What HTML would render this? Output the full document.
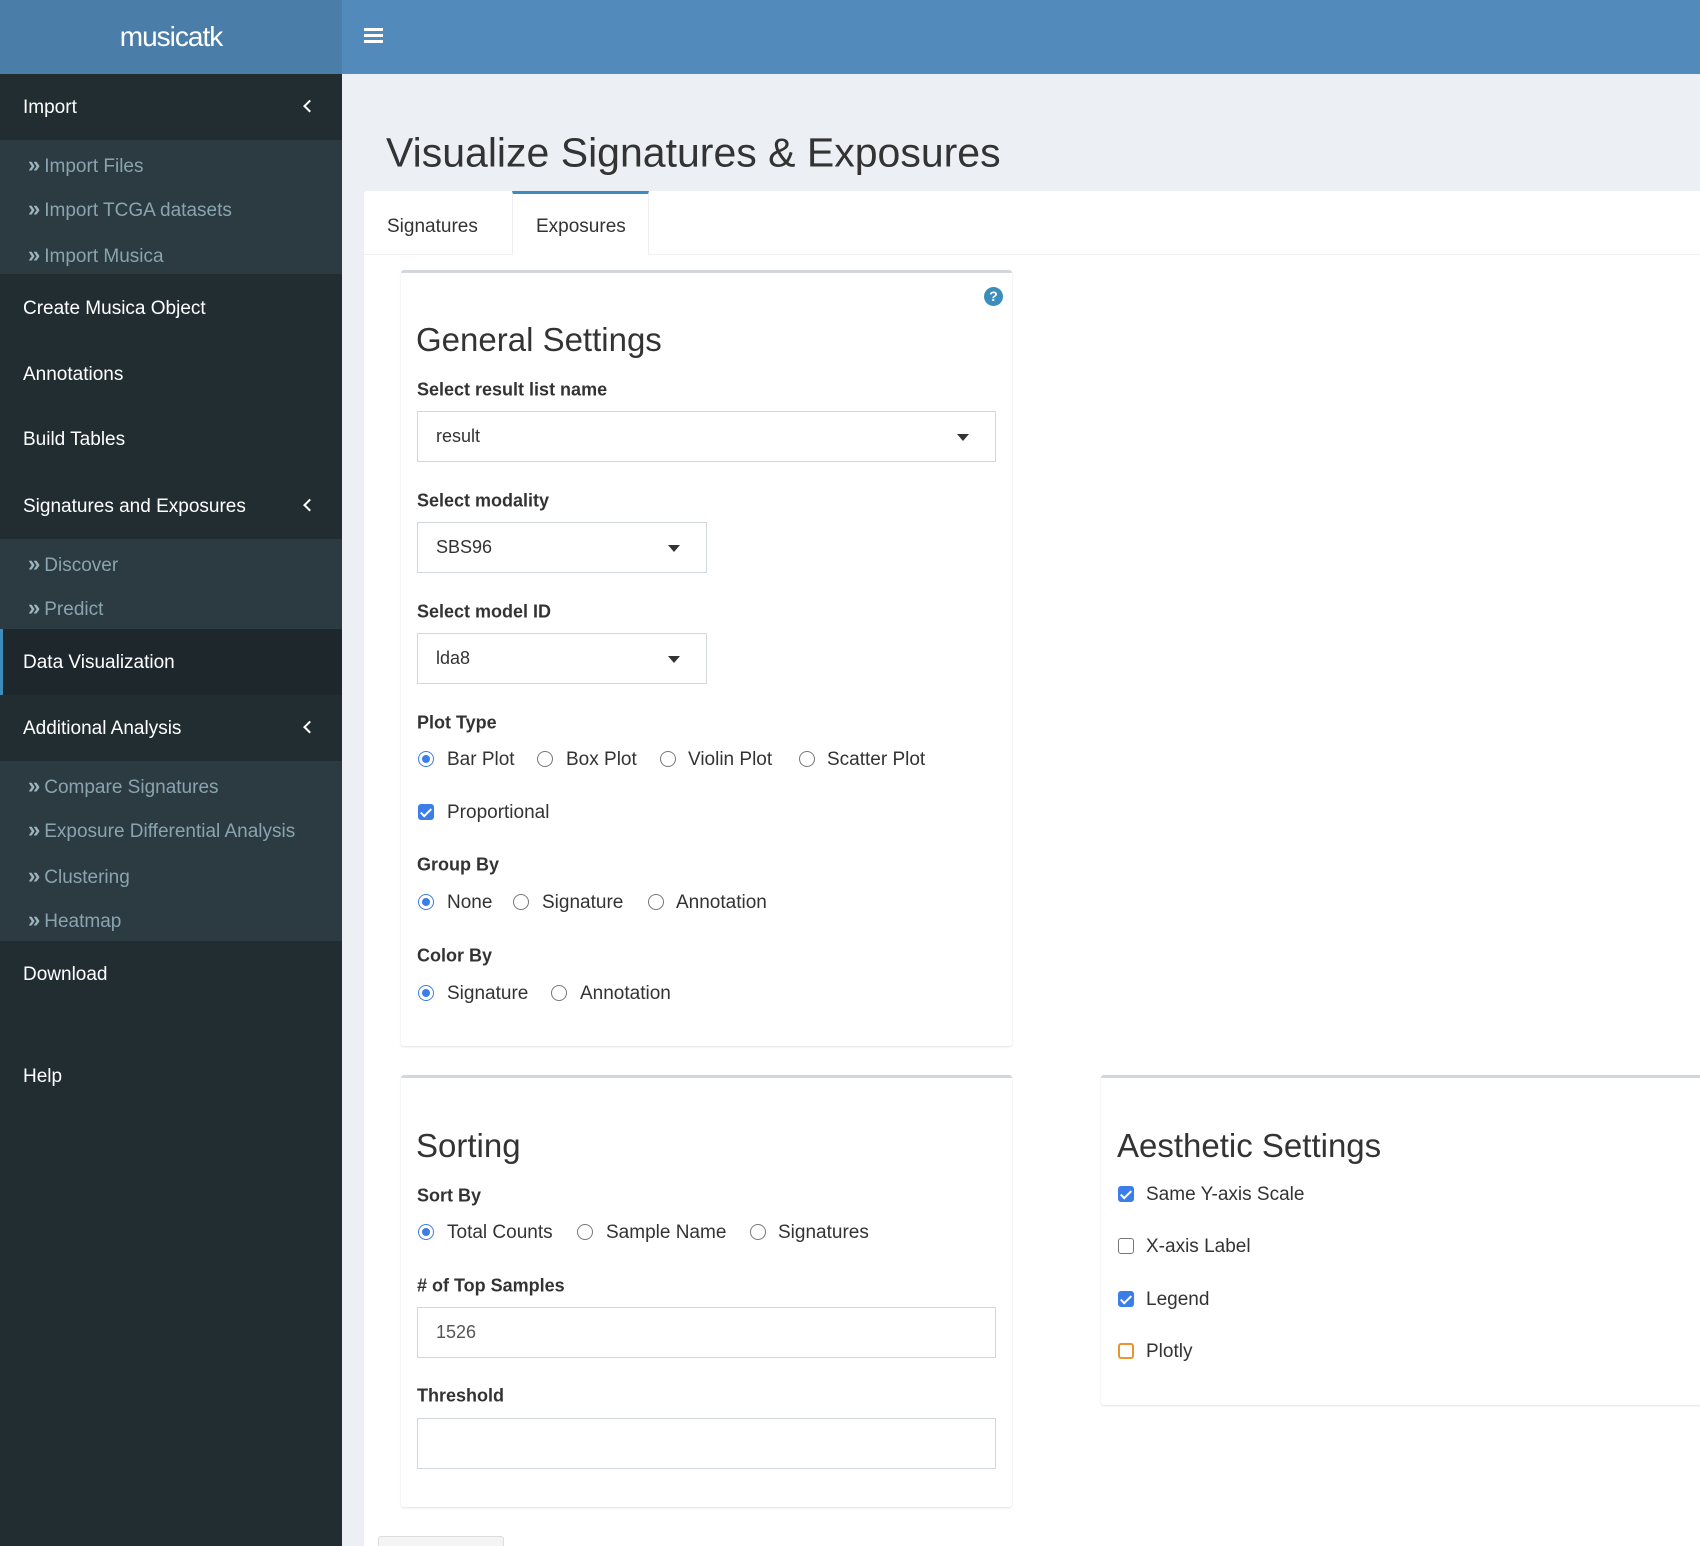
<!DOCTYPE html>
<html><head><meta charset="utf-8"><style>
*{box-sizing:border-box;margin:0;padding:0}
html,body{width:1700px;height:1546px;overflow:hidden}
body{background:#ecf0f5;font-family:"Liberation Sans",sans-serif;color:#333;position:relative}
.a{position:absolute}
.logo{left:0;top:0;width:342px;height:74px;background:#4a7ea8;color:#fff;font-size:28px;text-align:center;line-height:74px;letter-spacing:-1px}
.hdr{left:342px;top:0;width:1358px;height:74px;background:#528bbb}
.side{left:0;top:74px;width:342px;height:1472px;background:#222d32}
.it{position:absolute;left:0;width:342px;color:#fff;font-size:19px;padding-left:23px;display:flex;align-items:center;padding-top:2px}
.sub{position:absolute;left:0;width:342px;background:#2c3b41}
.si{position:absolute;left:28px;color:#8aa4af;font-size:19px;transform:translateY(-50%);margin-top:2px}
.si b{font-weight:bold;margin-right:4px;font-size:22px;color:#9fb5be}
.chev{position:absolute;right:28px;top:50%;width:9px;height:9px;border-left:2.5px solid #fff;border-bottom:2.5px solid #fff;transform:translateY(-60%) rotate(45deg)}
.lab{position:absolute;font-weight:bold;font-size:18px;color:#333;transform:translateY(-50%);margin-top:2px}
.t{position:absolute;font-size:19px;transform:translateY(-50%);margin-top:1px}
.h{position:absolute;font-size:33px;transform:translateY(-50%);color:#333;margin-top:2px}
.sel{position:absolute;border:1px solid #d2d6de;background:#fff;font-size:18px;padding-left:18px;display:flex;align-items:center}
.caret{position:absolute;right:26px;top:50%;margin-top:-3px;border-left:6px solid transparent;border-right:6px solid transparent;border-top:7px solid #333}
.card{position:absolute;background:#fff;border-top:3px solid #d2d6de;border-radius:3px;box-shadow:0 1px 2px rgba(0,0,0,.12)}
.r{position:absolute;width:16px;height:16px;border:1.5px solid #777;border-radius:50%;background:#fff;transform:translate(-50%,-50%)}
.r.on{border:1.5px solid #3b7de9}
.r.on::after{content:"";position:absolute;left:2.5px;top:2.5px;width:8px;height:8px;border-radius:50%;background:#3b7de9}
.c{position:absolute;width:16px;height:16px;border:1.5px solid #777;border-radius:3px;background:#fff;transform:translate(-50%,-50%)}
.c.on{background:#3b7de9;border-color:#3b7de9}
.c.on::after{content:"";position:absolute;left:4px;top:0.5px;width:4px;height:9px;border:solid #fff;border-width:0 2px 2px 0;transform:rotate(45deg)}
</style></head><body>
<div class="a logo">musicatk</div>
<div class="a hdr"><div class="a" style="left:22px;top:28px;width:19px;height:3px;background:#fff;box-shadow:0 6px 0 #fff,0 12px 0 #fff"></div></div>
<div class="a side"></div>
<div class="it" style="top:74px;height:66px">Import<span class="chev"></span></div>
<div class="sub" style="top:140px;height:134px"></div>
<div class="si" style="top:163px"><b>»</b>Import Files</div>
<div class="si" style="top:207px"><b>»</b>Import TCGA datasets</div>
<div class="si" style="top:253px"><b>»</b>Import Musica</div>
<div class="it" style="top:275px;height:66px">Create Musica Object</div>
<div class="it" style="top:341px;height:66px">Annotations</div>
<div class="it" style="top:406px;height:66px">Build Tables</div>
<div class="it" style="top:473px;height:66px">Signatures and Exposures<span class="chev"></span></div>
<div class="sub" style="top:539px;height:90px"></div>
<div class="si" style="top:562px"><b>»</b>Discover</div>
<div class="si" style="top:606px"><b>»</b>Predict</div>
<div class="it" style="top:629px;height:66px;background:#1e282c;border-left:3px solid #3c8dbc;padding-left:20px">Data Visualization</div>
<div class="it" style="top:695px;height:66px">Additional Analysis<span class="chev"></span></div>
<div class="sub" style="top:761px;height:180px"></div>
<div class="si" style="top:784px"><b>»</b>Compare Signatures</div>
<div class="si" style="top:828px"><b>»</b>Exposure Differential Analysis</div>
<div class="si" style="top:874px"><b>»</b>Clustering</div>
<div class="si" style="top:918px"><b>»</b>Heatmap</div>
<div class="it" style="top:941px;height:66px">Download</div>
<div class="it" style="top:1043px;height:66px">Help</div>

<div class="a" style="left:386px;top:153px;transform:translateY(-50%);font-size:41px;color:#333">Visualize Signatures &amp; Exposures</div>
<div class="a" style="left:364px;top:191px;width:1336px;height:1355px;background:#fff;border-radius:3px 0 0 0"></div>
<div class="a" style="left:364px;top:254px;width:1336px;height:1px;background:#f0f0f0"></div>
<div class="t" style="left:387px;top:226px">Signatures</div>
<div class="a" style="left:512px;top:191px;width:137px;height:64px;border-top:3px solid #3c8dbc;border-left:1px solid #eee;border-right:1px solid #eee;background:#fff"></div>
<div class="t" style="left:536px;top:226px">Exposures</div>

<div class="card" style="left:401px;top:270px;width:611px;height:776px"></div>
<div class="a" style="left:984px;top:287px;width:19px;height:19px;border-radius:50%;background:#3c8dbc;color:#fff;font-size:14px;font-weight:bold;text-align:center;line-height:19px">?</div>
<div class="h" style="left:416px;top:338px">General Settings</div>
<div class="lab" style="left:417px;top:388px">Select result list name</div>
<div class="sel" style="left:417px;top:411px;width:579px;height:51px">result<span class="caret"></span></div>
<div class="lab" style="left:417px;top:499px">Select modality</div>
<div class="sel" style="left:417px;top:522px;width:290px;height:51px">SBS96<span class="caret"></span></div>
<div class="lab" style="left:417px;top:610px">Select model ID</div>
<div class="sel" style="left:417px;top:633px;width:290px;height:51px">lda8<span class="caret"></span></div>
<div class="lab" style="left:417px;top:721px">Plot Type</div>
<div class="r on" style="left:426px;top:759px"></div><div class="t" style="left:447px;top:759px">Bar Plot</div>
<div class="r" style="left:545px;top:759px"></div><div class="t" style="left:566px;top:759px">Box Plot</div>
<div class="r" style="left:668px;top:759px"></div><div class="t" style="left:688px;top:759px">Violin Plot</div>
<div class="r" style="left:807px;top:759px"></div><div class="t" style="left:827px;top:759px">Scatter Plot</div>
<div class="c on" style="left:426px;top:812px"></div><div class="t" style="left:447px;top:812px">Proportional</div>
<div class="lab" style="left:417px;top:863px">Group By</div>
<div class="r on" style="left:426px;top:902px"></div><div class="t" style="left:447px;top:902px">None</div>
<div class="r" style="left:521px;top:902px"></div><div class="t" style="left:542px;top:902px">Signature</div>
<div class="r" style="left:656px;top:902px"></div><div class="t" style="left:676px;top:902px">Annotation</div>
<div class="lab" style="left:417px;top:954px">Color By</div>
<div class="r on" style="left:426px;top:993px"></div><div class="t" style="left:447px;top:993px">Signature</div>
<div class="r" style="left:559px;top:993px"></div><div class="t" style="left:580px;top:993px">Annotation</div>

<div class="card" style="left:401px;top:1075px;width:611px;height:432px"></div>
<div class="h" style="left:416px;top:1144px">Sorting</div>
<div class="lab" style="left:417px;top:1194px">Sort By</div>
<div class="r on" style="left:426px;top:1232px"></div><div class="t" style="left:447px;top:1232px">Total Counts</div>
<div class="r" style="left:585px;top:1232px"></div><div class="t" style="left:606px;top:1232px">Sample Name</div>
<div class="r" style="left:758px;top:1232px"></div><div class="t" style="left:778px;top:1232px">Signatures</div>
<div class="lab" style="left:417px;top:1284px"># of Top Samples</div>
<div class="sel" style="left:417px;top:1307px;width:579px;height:51px;color:#555">1526</div>
<div class="lab" style="left:417px;top:1394px">Threshold</div>
<div class="sel" style="left:417px;top:1418px;width:579px;height:51px"></div>
<div class="a" style="left:378px;top:1536px;width:126px;height:20px;background:#f4f4f4;border:1px solid #ddd;border-radius:3px"></div>

<div class="card" style="left:1101px;top:1075px;width:620px;height:330px"></div>
<div class="h" style="left:1117px;top:1144px">Aesthetic Settings</div>
<div class="c on" style="left:1126px;top:1194px"></div><div class="t" style="left:1146px;top:1194px">Same Y-axis Scale</div>
<div class="c" style="left:1126px;top:1246px"></div><div class="t" style="left:1146px;top:1246px">X-axis Label</div>
<div class="c on" style="left:1126px;top:1299px"></div><div class="t" style="left:1146px;top:1299px">Legend</div>
<div class="c" style="left:1126px;top:1351px;border-color:#e8952d;border-width:2px"></div><div class="t" style="left:1146px;top:1351px">Plotly</div>
</body></html>
